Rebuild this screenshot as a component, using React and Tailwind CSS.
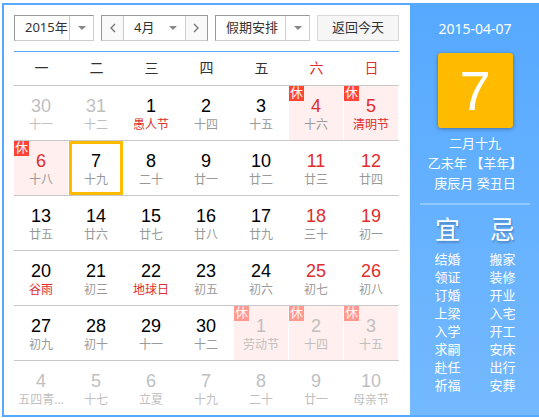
import React, { useState } from "react";
import clsx from "clsx";

const WEEKDAYS = ["一", "二", "三", "四", "五", "六", "日"];

// rest: public holiday, festival: lunar line in red, other: outside the month
const WEEKS = [
  [
    { day: 30, lunar: "十一", other: true },
    { day: 31, lunar: "十二", other: true },
    { day: 1, lunar: "愚人节", festival: true },
    { day: 2, lunar: "十四" },
    { day: 3, lunar: "十五" },
    { day: 4, lunar: "十六", rest: true, red: true },
    { day: 5, lunar: "清明节", rest: true, red: true, festival: true },
  ],
  [
    { day: 6, lunar: "十八", rest: true, red: true },
    { day: 7, lunar: "十九" },
    { day: 8, lunar: "二十" },
    { day: 9, lunar: "廿一" },
    { day: 10, lunar: "廿二" },
    { day: 11, lunar: "廿三", red: true },
    { day: 12, lunar: "廿四", red: true },
  ],
  [
    { day: 13, lunar: "廿五" },
    { day: 14, lunar: "廿六" },
    { day: 15, lunar: "廿七" },
    { day: 16, lunar: "廿八" },
    { day: 17, lunar: "廿九" },
    { day: 18, lunar: "三十", red: true },
    { day: 19, lunar: "初一", red: true },
  ],
  [
    { day: 20, lunar: "谷雨", festival: true },
    { day: 21, lunar: "初三" },
    { day: 22, lunar: "地球日", festival: true },
    { day: 23, lunar: "初五" },
    { day: 24, lunar: "初六" },
    { day: 25, lunar: "初七", red: true },
    { day: 26, lunar: "初八", red: true },
  ],
  [
    { day: 27, lunar: "初九" },
    { day: 28, lunar: "初十" },
    { day: 29, lunar: "十一" },
    { day: 30, lunar: "十二" },
    { day: 1, lunar: "劳动节", rest: true, other: true },
    { day: 2, lunar: "十四", rest: true, other: true },
    { day: 3, lunar: "十五", rest: true, other: true },
  ],
  [
    { day: 4, lunar: "五四青...", other: true },
    { day: 5, lunar: "十七", other: true },
    { day: 6, lunar: "立夏", other: true },
    { day: 7, lunar: "十九", other: true },
    { day: 8, lunar: "二十", other: true },
    { day: 9, lunar: "廿一", other: true },
    { day: 10, lunar: "母亲节", other: true },
  ],
];

const ALMANAC = [
  {
    title: "宜",
    items: ["结婚", "领证", "订婚", "上梁", "入学", "求嗣", "赴任", "祈福"],
  },
  {
    title: "忌",
    items: ["搬家", "装修", "开业", "入宅", "开工", "安床", "出行", "安葬"],
  },
];

const Dropdown = ({ label, options, className, arrowClassName }) => (
  <div className={clsx("relative bg-white", className)}>
    <select
      aria-label={label}
      className="block h-full w-full appearance-none overflow-hidden bg-transparent pr-6 pl-2.5 text-[13px] outline-none"
    >
      {options.map((option) => (
        <option key={option}>{option}</option>
      ))}
    </select>
    <span
      className={clsx(
        "pointer-events-none absolute inset-y-0 right-0 flex w-6 items-center justify-center border-[#ccc]",
        arrowClassName
      )}
    >
      <svg width="8" height="4" viewBox="0 0 8 4" fill="#888">
        <path d="M0 0h8L4 4z" />
      </svg>
    </span>
  </div>
);

const ArrowButton = ({ label, d, className }) => (
  <button
    type="button"
    aria-label={label}
    className={clsx(
      "flex w-[22px] items-center justify-center border-[#ccc] bg-[#f9f9f9]",
      className
    )}
  >
    <svg width="7" height="10" viewBox="0 0 7 10" fill="none" stroke="#777">
      <path d={d} strokeWidth="1.4" />
    </svg>
  </button>
);

const DayCell = ({ item, selected, onSelect }) => {
  const { day, lunar, other, rest, red, festival } = item;

  return (
    <button
      type="button"
      onClick={onSelect}
      className={clsx(
        "relative flex h-[54px] w-full flex-col items-center pt-2.5",
        rest && "bg-[#ffefee]",
        selected && "ring-[3px] ring-[#fb0] ring-inset"
      )}
    >
      {rest && (
        <span
          className={clsx(
            "absolute top-0 left-0 h-[15px] w-[15px] bg-[#f43] text-center text-[13px] leading-[13px] text-white",
            other && "opacity-50"
          )}
        >
          休
        </span>
      )}
      <span
        className={clsx(
          "font-['Liberation_Sans',sans-serif] text-lg leading-5",
          other ? "text-[#bfbfbf]" : red ? "text-[#e02d2d]" : "text-black"
        )}
      >
        {day}
      </span>
      <span
        className={clsx(
          "text-xs leading-[18px] whitespace-nowrap",
          other ? "text-[#bfbfbf]" : festival ? "text-[#e02d2d]" : "text-[#999]"
        )}
      >
        {lunar}
      </span>
    </button>
  );
};

const Toolbar = () => (
  <div className="flex h-[26px] justify-between">
    <Dropdown
      label="年份"
      options={["2015年", "2016年"]}
      className="w-20 border border-[#ccc] border-t-[#999] border-l-[#999]"
      arrowClassName="border-l"
    />
    <div className="flex w-[107px] border border-[#ccc] border-t-[#999] border-r-[#999] border-l-[#999]">
      <ArrowButton label="上个月" d="M6 1 2 5l4 4" className="border-r" />
      <Dropdown label="月份" options={["4月", "5月"]} className="flex-1" />
      <ArrowButton label="下个月" d="M1 1l4 4-4 4" className="border-l" />
    </div>
    <Dropdown
      label="假期安排"
      options={["假期安排", "清明节"]}
      className="w-[95px] border border-[#ccc] border-t-[#999] border-l-[#999]"
      arrowClassName="border-l"
    />
    <button
      type="button"
      className="w-[82px] border border-[#d8d8d8] bg-[#f6f6f6] text-[13px]"
    >
      返回今天
    </button>
  </div>
);

const Almanac = () => (
  <aside className="w-[129px] shrink-0 bg-linear-to-b from-[#56a9ff] to-[#74b9ff] pt-3.5 pr-[9px] pl-2.5 text-center text-[13px] leading-5 text-white">
    <p className="text-sm leading-5">2015-04-07</p>
    <div className="mx-auto mt-3.5 mb-[5px] h-[75px] w-[75px] rounded-[3px] bg-[#fb0] font-['Liberation_Sans',sans-serif] text-[56px] leading-[75px] shadow-[0_1px_4px_rgba(0,0,0,0.35)]">
      7
    </div>
    <p>二月十九</p>
    <p className="whitespace-nowrap">乙未年 【羊年】</p>
    <p>庚辰月 癸丑日</p>
    <div className="mt-2.5 flex border-t-2 border-[#91c8ff] pt-2">
      {ALMANAC.map((column) => (
        <div key={column.title} className="flex-1">
          <h2 className="mb-[5px] text-[25px] leading-8 [text-shadow:1px_2px_2px_rgba(0,0,0,0.25)]">
            {column.title}
          </h2>
          <ul className="leading-[18px]">
            {column.items.map((item) => (
              <li key={item}>{item}</li>
            ))}
          </ul>
        </div>
      ))}
    </div>
  </aside>
);

export default function App() {
  const [selected, setSelected] = useState("1-1");

  return (
    <div className="bg-white pt-[3px] pl-0.5 font-['Noto_Sans','Noto_Sans_CJK_SC',sans-serif] text-[#333]">
      <div className="flex border-y-2 border-l-2 border-[#56a9ff]">
        <main className="min-w-0 flex-1 pt-2.5 pr-[11px] pl-2.5">
          <Toolbar />
          <table className="mt-2.5 w-full table-fixed border-separate border-spacing-0 border-t border-[#56a9ff]">
            <thead>
              <tr>
                {WEEKDAYS.map((name, index) => (
                  <th
                    key={name}
                    scope="col"
                    className={clsx(
                      "h-[34px] border-b border-[#c8c8c8] p-0 pb-0.5 text-sm font-normal",
                      index > 4 && "text-[#e02d2d]"
                    )}
                  >
                    {name}
                  </th>
                ))}
              </tr>
            </thead>
            <tbody>
              {WEEKS.map((week, row) => (
                <tr key={row}>
                  {week.map((item, col) => (
                    <td
                      key={col}
                      className={clsx(
                        "p-0 pr-px",
                        row < WEEKS.length - 1 && "border-b border-[#c8c8c8]"
                      )}
                    >
                      <DayCell
                        item={item}
                        selected={selected === `${row}-${col}`}
                        onSelect={() => setSelected(`${row}-${col}`)}
                      />
                    </td>
                  ))}
                </tr>
              ))}
            </tbody>
          </table>
        </main>
        <Almanac />
      </div>
    </div>
  );
}
